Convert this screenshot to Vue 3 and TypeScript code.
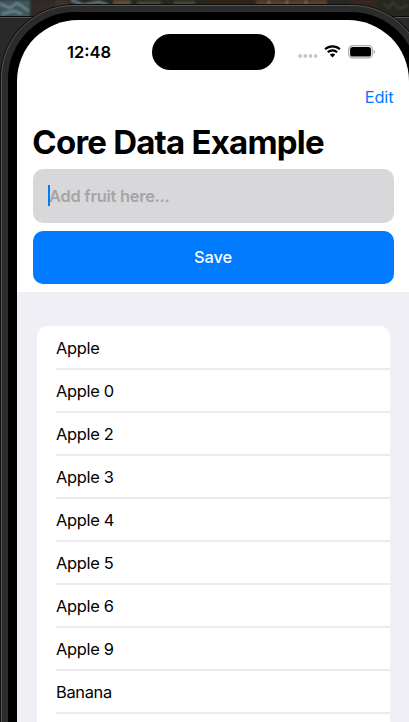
<script setup lang="ts">
const fruits: string[] = [
  'Apple',
  'Apple 0',
  'Apple 2',
  'Apple 3',
  'Apple 4',
  'Apple 5',
  'Apple 6',
  'Apple 9',
  'Banana',
]
</script>

<template>
  <div class="desktop">
    <svg class="wallpaper" width="409" height="16" viewBox="0 0 409 16" aria-hidden="true">
      <defs>
        <filter id="soft"><feGaussianBlur stdDeviation="1.2" /></filter>
      </defs>
      <rect width="409" height="16" fill="#252720" />
      <g filter="url(#soft)">
        <rect x="-3" width="33" height="18" fill="#3f555d" />
        <path d="M0 4l10 4 7-5 12 8M2 14l12-3 8 3" stroke="#718b92" stroke-width="2" fill="none" />
        <rect x="31" width="24" height="17" fill="#302a27" />
        <rect x="55" width="14" height="17" fill="#413029" />
        <path d="M71 0l12 5 16-3 9 3" stroke="#657982" stroke-width="3" fill="none" />
        <rect x="113" width="18" height="8" fill="#604b35" />
        <path d="M137 3h24M174 3h21" stroke="#4f5238" stroke-width="3" />
        <rect x="205" width="49" height="8" fill="#302219" />
        <rect x="256" width="71" height="8" fill="#5c3c29" />
        <path d="M269 0v5M287 0v5M306 0v5" stroke="#7d6556" stroke-width="2" />
        <rect x="350" width="27" height="16" fill="#39271b" />
        <path d="M383 3l6 5 4-6 7 7 8-4" stroke="#3a402c" stroke-width="2" fill="none" />
      </g>
    </svg>
    <div class="edge-mark first"></div>
    <div class="edge-mark second"></div>
    <div class="edge-mark third"></div>

    <div class="phone">
      <div class="bezel">
        <main class="screen">
          <header class="status">
            <span class="time">12:48</span>
            <span class="island"></span>
            <div class="indicators">
              <svg class="dots" width="20" height="4" viewBox="0 0 20 4" fill="#c7c7c8" aria-hidden="true">
                <circle cx="2" cy="2" r="1.9" />
                <circle cx="7.2" cy="2" r="1.9" />
                <circle cx="12.5" cy="2" r="1.9" />
                <circle cx="17.7" cy="2" r="1.9" />
              </svg>
              <svg class="wifi" width="17" height="13" viewBox="0 0 17 13" fill="none" aria-hidden="true">
                <path d="M1.1 4.2C5.1.4 11.9.4 15.9 4.2M3.8 7.2C6.4 4.8 10.6 4.8 13.2 7.2" stroke="#000" stroke-width="2.2" />
                <path d="M5.8 9.6c1.5-1.4 3.9-1.4 5.4 0l-2.7 2.8z" fill="#000" />
              </svg>
              <svg class="battery" width="28" height="14" viewBox="0 0 28 14" aria-hidden="true">
                <rect x=".7" y=".7" width="23.8" height="12.2" rx="3.9" fill="#fff" stroke="#aaa" stroke-width="1.2" />
                <rect x="2.1" y="2.1" width="21" height="9.4" rx="2.6" fill="#000" />
                <path d="M25.7 4.9c1.9.5 1.9 3.3 0 3.8z" fill="#aaa" />
              </svg>
            </div>
          </header>
          <nav class="toolbar"><button class="edit">Edit</button></nav>
          <h1>Core Data Example</h1>
          <div class="field"><span class="caret"></span><span class="placeholder">Add fruit here...</span></div>
          <button class="save">Save</button>
          <section class="list-area">
            <ul>
              <li v-for="fruit in fruits" :key="fruit"><span>{{ fruit }}</span></li>
            </ul>
          </section>
        </main>
      </div>
    </div>
  </div>
</template>

<style>
body {
  overflow: hidden;
}
</style>

<style scoped>
* {
  box-sizing: border-box;
}
.desktop {
  position: relative;
  width: 409px;
  height: 722px;
  overflow: hidden;
  background: #292928;
  font-family: Inter, "Liberation Sans", sans-serif;
  color: #000;
}
.wallpaper {
  position: absolute;
  top: 0;
  left: 0;
  border-bottom: 1px solid #0b0b0b;
  box-shadow: 0 1px #565656;
  height: 17px;
}
.edge-mark {
  position: absolute;
  left: 0;
  width: 2px;
  height: 92px;
  background: #111;
  border-bottom: 1px solid #666;
}
.edge-mark.first { top: 69px; }
.edge-mark.second { top: 206px; }
.edge-mark.third { top: 358px; }
.phone {
  position: relative;
  margin: 5px 0 0 1px;
  width: 424px;
  height: 850px;
  padding: 6px;
  border: 1px solid #555;
  border-radius: 73px;
  background: #2b2b2b;
  box-shadow: 0 0 0 1px #111;
}
.bezel {
  height: 100%;
  padding: 8px 9px;
  border-radius: 67px;
  background: #000;
}
.screen {
  width: 392px;
  height: 820px;
  border-radius: 61px;
  overflow: hidden;
  background: #fff;
}
.status {
  height: 63px;
  display: grid;
  grid-template-columns: 134.5px 123px 1fr;
  align-items: center;
}
.time {
  padding-left: 50px;
  font-size: 16.5px;
  font-weight: 600;
  line-height: 20px;
}
.island {
  width: 123px;
  height: 36px;
  border-radius: 18px;
  background: #000;
}
.indicators {
  display: flex;
  align-items: center;
  padding-left: 23px;
}
.dots { margin-top: 9px; }
.wifi { margin-left: 6.5px; }
.battery { margin-left: 7px; }
button {
  padding: 0;
  border: 0;
  font-family: inherit;
}
.toolbar {
  height: 28px;
  display: flex;
  justify-content: flex-end;
  padding-right: 15.5px;
}
.edit {
  height: 28px;
  background: transparent;
  color: #007aff;
  font-size: 16.4px;
  line-height: 28px;
  letter-spacing: -.1px;
}
h1 {
  height: 57.5px;
  margin: 0;
  padding: 10px 0 0 15.3px;
  font-size: 33px;
  line-height: 42px;
  font-weight: 700;
  letter-spacing: -.78px;
  white-space: nowrap;
}
.field {
  height: 54px;
  margin: 0 15.5px 8px;
  padding-left: 15.5px;
  display: flex;
  align-items: center;
  border-radius: 10px;
  background: #d8d8da;
}
.caret {
  width: 2px;
  height: 21px;
  background: #007aff;
}
.placeholder {
  margin-left: -1px;
  color: #a5a5a7;
  font-size: 16.4px;
  font-weight: 600;
  line-height: 22px;
  letter-spacing: -.24px;
}
.save {
  display: block;
  width: 361px;
  height: 53.5px;
  margin: 0 15.5px 8px;
  border-radius: 10px;
  background: #007aff;
  color: #fff;
  font-size: 16.4px;
  font-weight: 500;
  letter-spacing: -.15px;
}
.list-area {
  height: 560px;
  padding: 34px 19px 0 19.5px;
  background: #f0eff6;
}
ul {
  height: 500px;
  margin: 0;
  padding: 1px 0 0 19.5px;
  border-radius: 10px;
  background: #fff;
  list-style: none;
  overflow: hidden;
}
li {
  height: 43px;
  display: flex;
  align-items: center;
  border-bottom: 2px solid #ececec;
  font-size: 16.4px;
  line-height: 22px;
  letter-spacing: -.3px;
}
</style>
